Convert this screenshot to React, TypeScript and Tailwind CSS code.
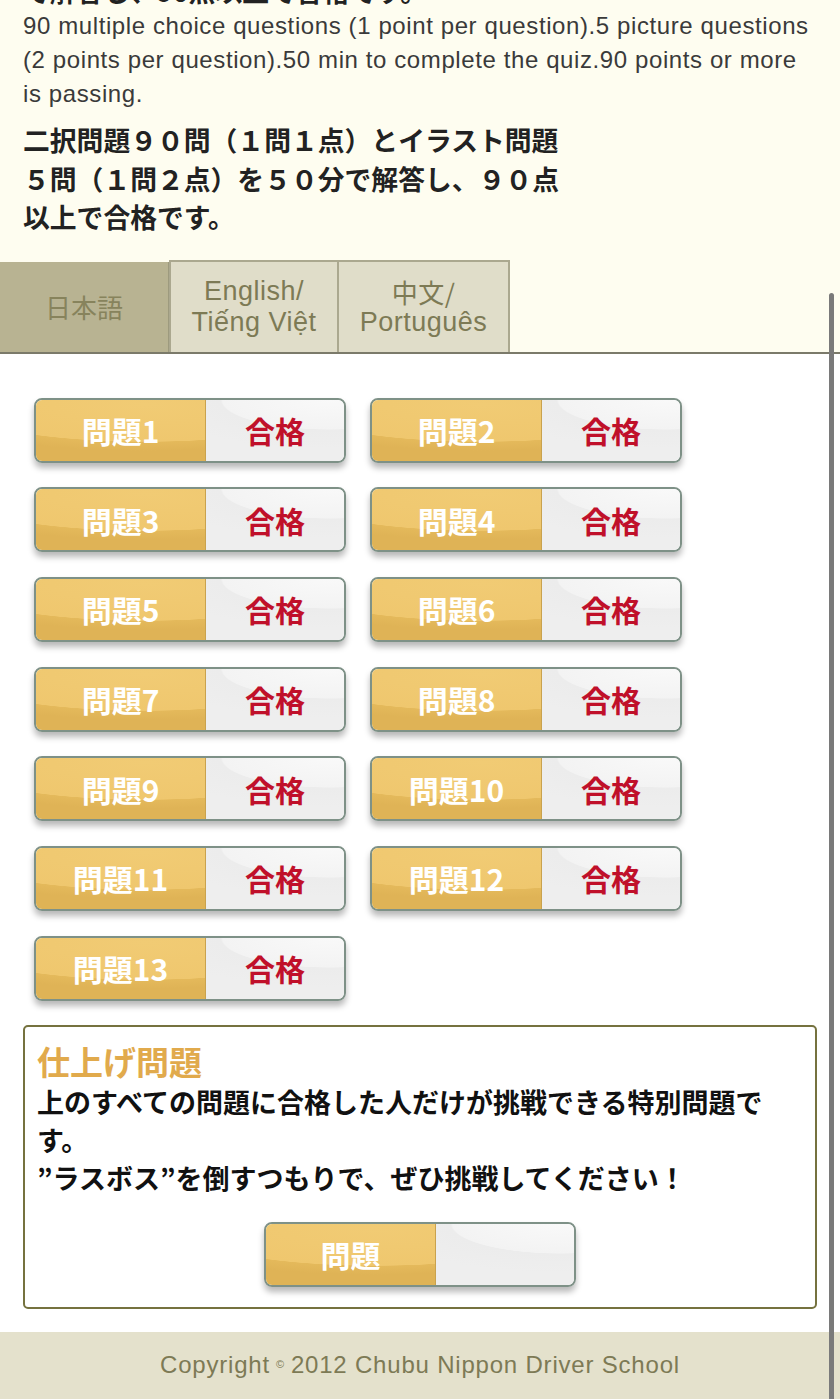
import React from "react";

const FONT = { fontFamily: '"Noto Sans CJK JP", "Noto Sans", sans-serif' };
const LATIN = { fontFamily: '"Liberation Sans", "Noto Sans CJK JP", sans-serif' };

function QButton({ label, pass }: { label: string; pass: boolean }) {
  return (
    <div className="flex w-[312px] h-[65px] rounded-[8px] border-2 border-[#7e9187] overflow-hidden shadow-[0_5px_6px_rgba(0,0,0,0.28)]">
      <div className="w-[170px] flex items-center justify-center bg-[radial-gradient(ellipse_140%_75%_at_65%_8%,#f1cb74_0%,#efc76e_80%,#e4b95b_81%,#dfb356_100%)] border-r border-[#c9a24e]">
        <span className="text-white text-[30px] font-bold leading-none">{label}</span>
      </div>
      <div className="flex-1 flex items-center justify-center bg-[radial-gradient(ellipse_130%_80%_at_90%_0%,#f9f9f9_0%,#f3f3f3_60%,#ececec_61%,#eeeeee_100%)]">
        {pass && <span className="text-[#c0102a] text-[30px] font-bold leading-none">合格</span>}
      </div>
    </div>
  );
}

export default function App() {
  const items = Array.from({ length: 13 }, (_, i) => `問題${i + 1}`);
  return (
    <div className="relative w-[840px] min-h-[1399px] bg-white overflow-hidden" style={FONT}>
      <div className="bg-[#fefdf0]">
        <div className="px-[23px]">
          <div className="-mt-[24px] text-[26.8px] leading-[30px] font-bold text-[#222]">で解答し、90点以上で合格です。</div>
          <div className="mt-[3px] text-[24px] leading-[34px] tracking-[0.6px] text-[#3a3a3a]" style={LATIN}>
            90 multiple choice questions (1 point per question).5 picture questions (2 points per question).50 min to complete the quiz.90 points or more is passing.
          </div>
          <div className="mt-[10px] text-[26.8px] leading-[38.5px] font-bold text-[#222]">
            二択問題９０問（１問１点）とイラスト問題<br />
            ５問（１問２点）を５０分で解答し、９０点<br />
            以上で合格です。
          </div>
        </div>
        <div className="mt-[23px] flex items-end border-b-2 border-[#7b7a6a]" style={LATIN}>
          <div className="w-[169px] h-[90px] flex items-center justify-center bg-[#b8b392] border-r border-[#9d9a7e] text-[#87835c] text-[26px] leading-[31px]" style={FONT}>日本語</div>
          <div className="w-[170px] h-[92px] flex flex-col items-center justify-center bg-[#e0ddc9] border-2 border-b-0 border-[#aba88f] text-[#7d7a55] text-[27px] leading-[31px] tracking-[0.5px]">
            <span>English/</span>
            <span>Tiếng Việt</span>
          </div>
          <div className="w-[171px] h-[92px] flex flex-col items-center justify-center bg-[#e0ddc9] border-2 border-b-0 border-l-0 border-[#aba88f] text-[#7d7a55] text-[27px] leading-[31px] tracking-[0.5px]">
            <span style={FONT} className="text-[26px]">中文/</span>
            <span>Português</span>
          </div>
        </div>
      </div>

      <div className="pt-[44px] px-[23px]">
        <div className="pl-[11px] grid grid-cols-[312px_312px] gap-x-[24px] gap-y-[24.7px]">
          {items.map((l) => (
            <QButton key={l} label={l} pass />
          ))}
        </div>

        <div className="mt-[24px] border-2 border-[#75723f] rounded-[5px] px-[12px] pt-[12px] pb-[20px]">
          <div className="text-[#e1aa4c] text-[33px] font-bold leading-[44px]">仕上げ問題</div>
          <div className="text-[27px] font-bold leading-[38px] text-[#111]">
            上のすべての問題に合格した人だけが挑戦できる特別問題で<br />
            す。<br />
            ”ラスボス”を倒すつもりで、ぜひ挑戦してください！
          </div>
          <div className="mt-[25px] flex justify-center">
            <QButton label="問題" pass={false} />
          </div>
        </div>
      </div>

      <div className="mt-[23px] h-[70px] bg-[#e4e1cc] flex items-center justify-center text-[#7d7a55] text-[24px] tracking-[0.8px] pb-[4px]" style={LATIN}>
        Copyright <span className="text-[11px] mx-[6px]">©</span> 2012 Chubu Nippon Driver School
      </div>

      <div className="absolute left-[829px] top-[293px] w-[5px] h-[1120px] rounded-full bg-[#7a7a7a]" />
    </div>
  );
}
